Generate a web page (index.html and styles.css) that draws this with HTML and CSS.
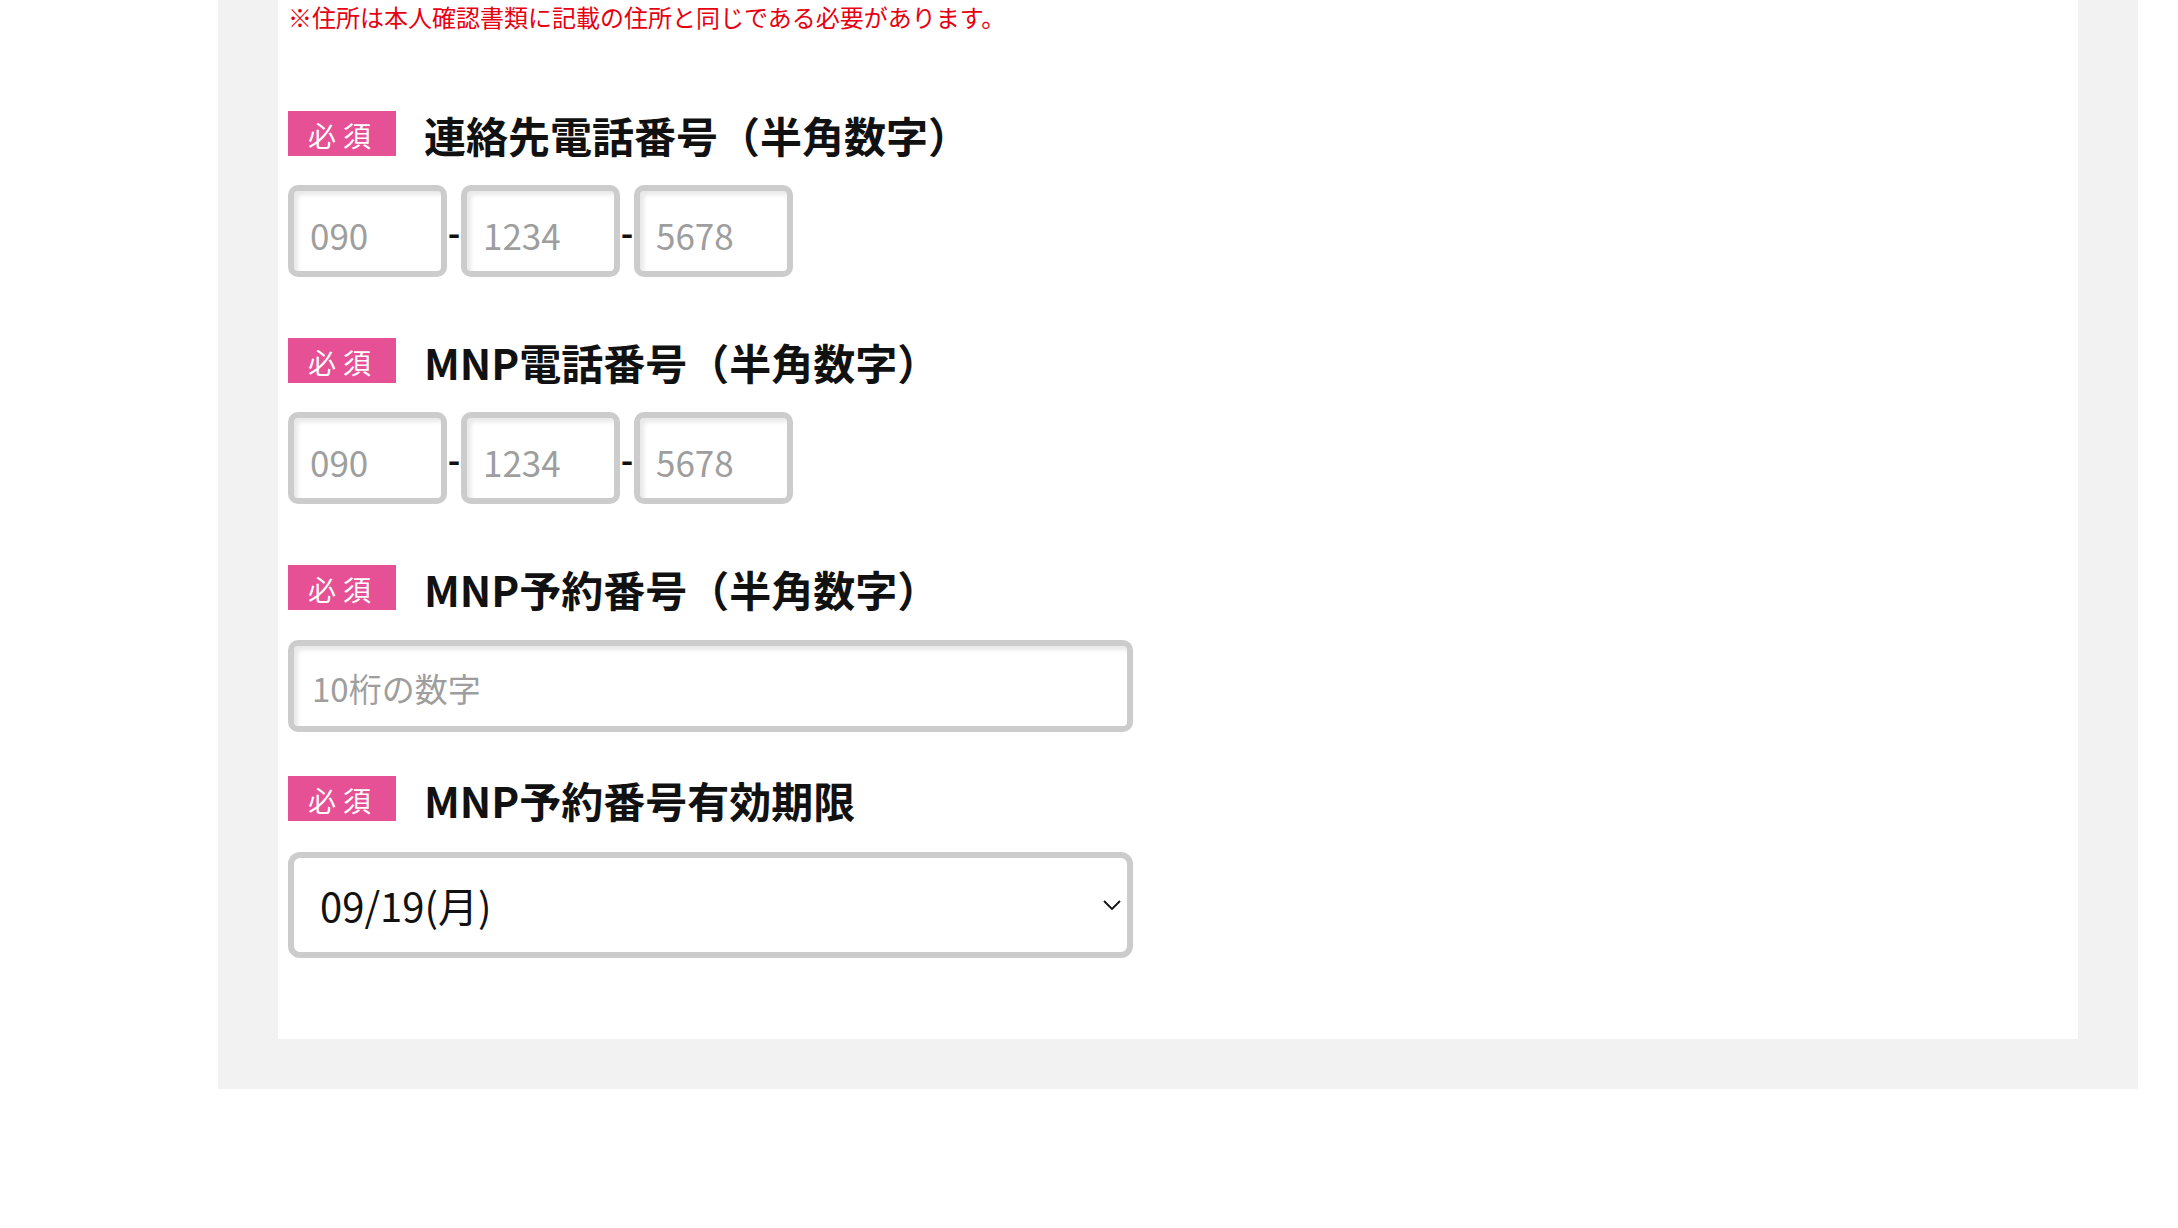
FILE: index.html
```html
<!DOCTYPE html>
<html lang="ja">
<head>
<meta charset="utf-8">
<title>MNP</title>
<link rel="stylesheet" href="styles.css">
</head>
<body>
<div class="panel">
  <div class="card">
    <p class="note">※住所は本人確認書類に記載の住所と同じである必要があります。</p>

    <div class="field field-first">
      <div class="field-head">
        <span class="badge">必須</span>
        <h3 class="field-title">連絡先電話番号（半角数字）</h3>
      </div>
      <div class="tel-row">
        <input class="box box-tel" type="text" placeholder="090">
        <span class="dash">-</span>
        <input class="box box-tel" type="text" placeholder="1234">
        <span class="dash">-</span>
        <input class="box box-tel" type="text" placeholder="5678">
      </div>
    </div>

    <div class="field field-gap">
      <div class="field-head">
        <span class="badge">必須</span>
        <h3 class="field-title">MNP電話番号（半角数字）</h3>
      </div>
      <div class="tel-row">
        <input class="box box-tel" type="text" placeholder="090">
        <span class="dash">-</span>
        <input class="box box-tel" type="text" placeholder="1234">
        <span class="dash">-</span>
        <input class="box box-tel" type="text" placeholder="5678">
      </div>
    </div>

    <div class="field field-gap">
      <div class="field-head">
        <span class="badge">必須</span>
        <h3 class="field-title">MNP予約番号（半角数字）</h3>
      </div>
      <div class="wide-row">
        <input class="box box-wide" type="text" placeholder="10桁の数字">
      </div>
    </div>

    <div class="field field-gap-small">
      <div class="field-head">
        <span class="badge">必須</span>
        <h3 class="field-title">MNP予約番号有効期限</h3>
      </div>
      <div class="select-wrap">
        <select class="select">
          <option>09/19(月)</option>
        </select>
        <svg class="chevron" width="18" height="10" viewBox="0 0 18 10" aria-hidden="true">
          <path d="M1 1 L9 9 L17 1" fill="none" stroke="#111" stroke-width="1.8"/>
        </svg>
      </div>
    </div>
  </div>
</div>
</body>
</html>
```

FILE: styles.css
```css
* { box-sizing: border-box; }

html, body {
  margin: 0;
  padding: 0;
  background: #ffffff;
}

body {
  font-family: "Noto Sans CJK JP", "Noto Sans", sans-serif;
  color: #111;
}

.panel {
  margin-left: 218px;
  width: 1920px;
  background: #f2f2f2;
  padding: 0 60px 50px;
}

.card {
  background: #ffffff;
  padding: 0 10px 81px;
}

.note {
  margin: 0;
  font-size: 24px;
  line-height: 34px;
  color: #e60012;
}

.field-first { margin-top: 77px; }
.field-gap { margin-top: 61px; }
.field-gap-small { margin-top: 44px; }

.field-head {
  display: flex;
  align-items: flex-start;
  gap: 28px;
  height: 45px;
}

.badge {
  display: block;
  width: 108px;
  height: 45px;
  background: #e65094;
  color: #ffffff;
  font-size: 28px;
  line-height: 41px;
  padding-top: 4px;
  letter-spacing: 7px;
  padding-left: 20px;
  white-space: nowrap;
}

.field-title {
  margin: 0;
  font-size: 42px;
  line-height: 45px;
  font-weight: 700;
  color: #111;
  white-space: nowrap;
  padding-top: 1px;
}

.tel-row {
  margin-top: 29px;
  display: flex;
  align-items: center;
}

.wide-row { margin-top: 30px; }

.box {
  display: block;
  height: 92px;
  border: 6px solid #cccccc;
  border-radius: 10px;
  background: #ffffff;
  box-shadow: inset 4px 4px 4px rgba(0, 0, 0, 0.09);
  font-family: "Noto Sans CJK JP", "Noto Sans", sans-serif;
  font-size: 35px;
  color: #333;
  outline: none;
  margin: 0;
}

.box::placeholder { color: #9e9e9e; opacity: 1; }

.box-tel {
  width: 159px;
  padding: 6px 0 0 16px;
}

.box-wide {
  width: 845px;
  padding: 4px 0 0 18px;
  font-size: 33px;
}

.dash {
  width: 14px;
  text-align: center;
  font-size: 34px;
  font-weight: 700;
  line-height: 1;
  color: #111;
  padding-top: 2px;
}

.select-wrap {
  position: relative;
  margin-top: 31px;
  width: 845px;
}

.select {
  display: block;
  width: 845px;
  height: 106px;
  border: 6px solid #cccccc;
  border-radius: 12px;
  background: #ffffff;
  -webkit-appearance: none;
  appearance: none;
  font-family: "Noto Sans CJK JP", "Noto Sans", sans-serif;
  font-size: 40px;
  color: #111;
  padding: 0 0 0 26px;
  outline: none;
  margin: 0;
}

.chevron {
  position: absolute;
  left: 815px;
  top: 48px;
}
```
